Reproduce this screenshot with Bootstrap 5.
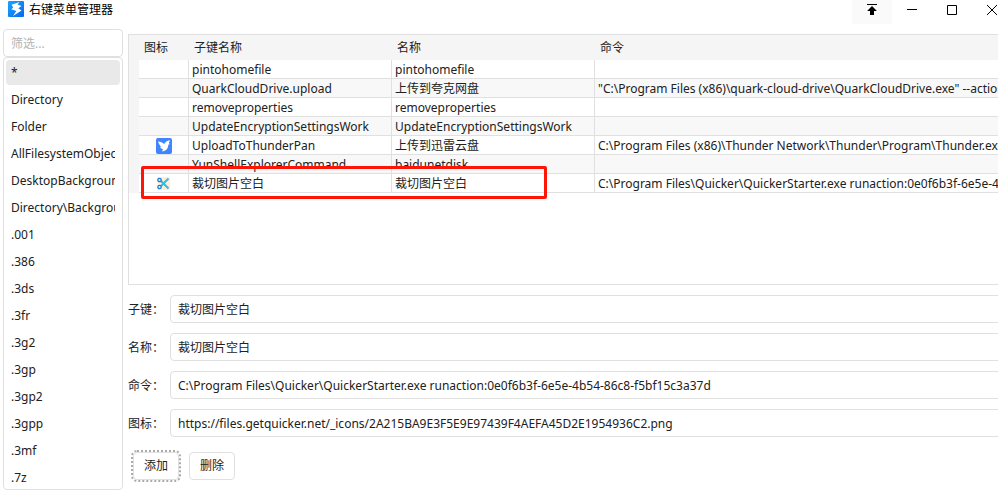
<!DOCTYPE html>
<html lang="zh-CN">
<head>
<meta charset="utf-8">
<meta name="viewport" content="width=device-width, initial-scale=1">
<title>右键菜单管理器</title>
<link href="https://cdn.jsdelivr.net/npm/bootstrap@5.3.0/dist/css/bootstrap.min.css" rel="stylesheet">
<style>
:root { --line: #e0e0e0; --ink: #212121; }
body { font: 12px/18px "Noto Sans", "Noto Sans CJK SC", sans-serif; color: var(--ink); background: #fff; }
/* the window reaches a little past the right edge of the screen */
.app-window { width: calc(100% + 14px); }
.title-bar { height: 24px; padding-left: 8px; color: #000; }
.title-text { gap: 5px; padding-top: 1px; }
.win-btn { width: 40px; height: 24px; padding: 0 0 4px; border: 0; border-radius: 0; display: flex; align-items: center; justify-content: center; color: #000; }
.win-btn.pin { background: #fafafa; }
.work-area { padding: 5px 0 0 3px; gap: 5px; }
.side { width: 120px; }
.field { height: 28px; padding: 0 7px; font-size: 12px; line-height: 18px; color: var(--ink); border: 1px solid var(--line); border-radius: 4px; }
.field::placeholder { color: #b4b4b4; }
.key-list { max-height: calc(100vh - 57px); overflow: hidden; border: 1px solid var(--line); border-radius: 4px; padding: 2px 2px 0; }
.key-item { flex: none; height: 25px; margin-bottom: 2px; padding: 0 5px; border: 0; border-radius: 4px; background: none; color: var(--ink); text-align: left; }
.key-item span { display: block; overflow: hidden; white-space: nowrap; }
.key-item.chosen { background: #e9e9e9; }
.content { padding-top: 5px; }
.grid-box { height: 251px; border: 1px solid var(--line); }
.key-grid { width: 100%; min-width: 960px; table-layout: fixed; border-collapse: separate; border-spacing: 0; }
.key-grid th { height: 25px; padding: 0 5px; font-weight: 400; background: #f5f5f5; }
.key-grid td { height: 19px; padding: 2px 3px 0; line-height: 16px; white-space: nowrap; border: solid var(--line); border-width: 0 1px 1px 0; background: #fff; }
.key-grid tbody tr:nth-child(even) td { background: #f8f8f8; }
.key-grid tbody td.edge, .key-grid tbody tr:nth-child(even) td.edge { border: 0; background: #f5f5f5; padding: 0; }
.key-grid svg { display: block; margin: 0 auto; }
.callout-frame { left: 12px; top: 131px; width: 406px; height: 33px; border: 3px solid #ff1408; border-radius: 2px; pointer-events: none; }
.form-rows { gap: 10px; padding-top: 10px; }
.form-rows label { flex: none; width: 42px; padding-top: 2px; }
.action { width: 46px; height: 28px; padding: 0; font-size: 12px; line-height: 18px; color: var(--ink); border: 1px solid var(--line); border-radius: 4px; background: #fff; }
.action.focused { outline: 2px dotted #aaa; outline-offset: 0; }
.actions { gap: 10px; padding: 15px 0 0 5px; }
</style>
<script src="https://cdn.jsdelivr.net/npm/bootstrap@5.3.0/dist/js/bootstrap.bundle.min.js"></script>
</head>
<body class="overflow-hidden">
<div class="app-window">
  <header class="title-bar d-flex">
    <div class="title-text d-flex flex-grow-1">
      <svg width="16" height="16" viewBox="0 0 16 16" aria-hidden="true"><defs><linearGradient id="sky" x1="0" y1="0" x2="1" y2="1"><stop offset="0" stop-color="#1aa5ff"/><stop offset="1" stop-color="#0868f0"/></linearGradient></defs><rect width="16" height="16" rx="1" fill="url(#sky)"/><path d="M11.500 1 3.500 3.700 5.200 6.600 3.300 8.200l5 1.700L5 15l8.500-5.600-3.200-2.100L13.500 5 9.500 3.600z" fill="#fff"/></svg>
      <span>右键菜单管理器</span>
    </div>
    <button type="button" class="btn win-btn pin" aria-label="置顶"><svg width="10" height="12" viewBox="0 0 10 12"><path d="M0 0h10v1H0zM5 2l4.500 4.500V7H7v4H3V7H.5v-.5z"/></svg></button>
    <button type="button" class="btn win-btn" aria-label="最小化"><svg width="10" height="10" viewBox="0 0 10 10"><path d="M0 4h10v1H0z"/></svg></button>
    <button type="button" class="btn win-btn" aria-label="最大化"><svg width="10" height="10" viewBox="0 0 10 10"><path d="M.5.5h9v9h-9z" fill="none" stroke="#000"/></svg></button>
    <button type="button" class="btn win-btn" aria-label="关闭"><svg width="10" height="10" viewBox="0 0 10 10"><path d="M0 0l10 10M10 0L0 10" stroke="#000"/></svg></button>
  </header>
  <main class="work-area d-flex">
    <aside class="side flex-shrink-0">
      <input type="text" class="form-control field" placeholder="筛选..." aria-label="筛选">
      <div class="key-list d-flex flex-column">
        <button type="button" class="key-item chosen"><span>*</span></button>
        <button type="button" class="key-item"><span>Directory</span></button>
        <button type="button" class="key-item"><span>Folder</span></button>
        <button type="button" class="key-item"><span>AllFilesystemObjects</span></button>
        <button type="button" class="key-item"><span>DesktopBackground</span></button>
        <button type="button" class="key-item"><span>Directory\Background</span></button>
        <button type="button" class="key-item"><span>.001</span></button>
        <button type="button" class="key-item"><span>.386</span></button>
        <button type="button" class="key-item"><span>.3ds</span></button>
        <button type="button" class="key-item"><span>.3fr</span></button>
        <button type="button" class="key-item"><span>.3g2</span></button>
        <button type="button" class="key-item"><span>.3gp</span></button>
        <button type="button" class="key-item"><span>.3gp2</span></button>
        <button type="button" class="key-item"><span>.3gpp</span></button>
        <button type="button" class="key-item"><span>.3mf</span></button>
        <button type="button" class="key-item mb-0"><span>.7z</span></button>
      </div>
    </aside>
    <section class="content flex-grow-1 overflow-hidden">
      <div class="grid-box position-relative overflow-hidden">
        <table class="key-grid">
          <colgroup><col style="width:10px"><col style="width:50px"><col style="width:203px"><col style="width:203px"><col></colgroup>
          <thead><tr><th class="p-0"></th><th>图标</th><th>子键名称</th><th>名称</th><th>命令</th></tr></thead>
          <tbody>
            <tr><td class="edge"></td><td></td><td>pintohomefile</td><td>pintohomefile</td><td></td></tr>
            <tr><td class="edge"></td><td></td><td>QuarkCloudDrive.upload</td><td>上传到夸克网盘</td><td>"C:\Program Files (x86)\quark-cloud-drive\QuarkCloudDrive.exe" --action</td></tr>
            <tr><td class="edge"></td><td></td><td>removeproperties</td><td>removeproperties</td><td></td></tr>
            <tr><td class="edge"></td><td></td><td>UpdateEncryptionSettingsWork</td><td>UpdateEncryptionSettingsWork</td><td></td></tr>
            <tr><td class="edge"></td><td><svg width="16" height="16" viewBox="0 0 16 16" aria-hidden="true"><rect width="16" height="16" rx="2" fill="#3f85ff"/><path d="M2 3.500c2.600.2 4.600 1 6.200 2.500C9.200 4.200 11 2.700 14 2c-.5 1.300-.8 2.200-1.200 3l1 .9-1.500.8c0 3.700-2.300 6.600-6.500 6.600l1.500-1.800C5.400 11 4.400 10 4 8.600l1.600.1C3.800 7.500 2.600 5.800 2 3.500z" fill="#fff"/></svg></td><td>UploadToThunderPan</td><td>上传到迅雷云盘</td><td>C:\Program Files (x86)\Thunder Network\Thunder\Program\Thunder.exe</td></tr>
            <tr><td class="edge"></td><td></td><td>YunShellExplorerCommand</td><td>baidunetdisk</td><td></td></tr>
            <tr><td class="edge"></td><td><svg width="16" height="16" viewBox="0 0 16 16" aria-hidden="true"><path d="M2 1h12v13H2z" fill="#fff0d2"/><path d="M5 5 12.500 12.500M5 10 12.500 2.500" stroke="#35bdf2" stroke-width="2.200"/><g fill="none" stroke="#1a7fdc" stroke-width="1.300"><circle cx="3.500" cy="4" r="1.700"/><circle cx="3.500" cy="11" r="1.700"/></g></svg></td><td>裁切图片空白</td><td>裁切图片空白</td><td>C:\Program Files\Quicker\QuickerStarter.exe runaction:0e0f6b3f-6e5e-4b54-86c8-f5bf15c3a37d</td></tr>
          </tbody>
        </table>
        <div class="callout-frame position-absolute"></div>
      </div>
      <form class="form-rows d-flex flex-column">
        <div class="d-flex align-items-center"><label for="subkey">子键：</label><input id="subkey" type="text" class="form-control field" value="裁切图片空白"></div>
        <div class="d-flex align-items-center"><label for="caption">名称：</label><input id="caption" type="text" class="form-control field" value="裁切图片空白"></div>
        <div class="d-flex align-items-center"><label for="command">命令：</label><input id="command" type="text" class="form-control field" value="C:\Program Files\Quicker\QuickerStarter.exe runaction:0e0f6b3f-6e5e-4b54-86c8-f5bf15c3a37d"></div>
        <div class="d-flex align-items-center"><label for="iconurl">图标：</label><input id="iconurl" type="text" class="form-control field" value="https://files.getquicker.net/_icons/2A215BA9E3F5E9E97439F4AEFA45D2E1954936C2.png"></div>
      </form>
      <div class="actions d-flex">
        <button type="button" class="btn action focused">添加</button>
        <button type="button" class="btn action">删除</button>
      </div>
    </section>
  </main>
</div>
</body>
</html>
